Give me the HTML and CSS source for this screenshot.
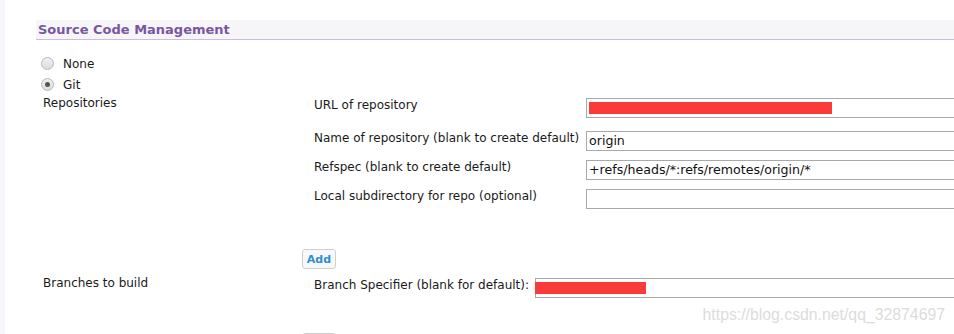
FILE: index.html
```html
<!DOCTYPE html>
<html lang="en">
<head>
    <meta charset="UTF-8">
    <title>Source Code Management</title>
    <link rel="stylesheet" href="styles.css">
</head>
<body>
    <div class="page">
        <div class="section-header">Source Code Management</div>

        <div class="scm-options">
            <label class="radio-row"><span class="radio"></span>None</label>
            <label class="radio-row"><span class="radio checked"></span>Git</label>
        </div>

        <div class="block">
            <div class="block-label">Repositories</div>
            <div class="block-body">
                <div class="field-row first">
                    <div class="field-label">URL of repository</div>
                    <div class="field-input"><span class="redacted url"></span></div>
                </div>
                <div class="field-row second">
                    <div class="field-label">Name of repository (blank to create default)</div>
                    <div class="field-input">origin</div>
                </div>
                <div class="field-row">
                    <div class="field-label">Refspec (blank to create default)</div>
                    <div class="field-input">+refs/heads/*:refs/remotes/origin/*</div>
                </div>
                <div class="field-row">
                    <div class="field-label">Local subdirectory for repo (optional)</div>
                    <div class="field-input"></div>
                </div>
            </div>
        </div>

        <div class="add-row">
            <button class="btn">Add</button>
        </div>

        <div class="block branches">
            <div class="block-label">Branches to build</div>
            <div class="block-body">
                <div class="field-row first inline">
                    <div class="field-label">Branch Specifier (blank for default):</div>
                    <div class="field-input wide"><span class="redacted branch"></span></div>
                </div>
            </div>
        </div>

        <div class="add-row bottom">
            <button class="btn"></button>
        </div>
    </div>

    <div class="watermark">https://blog.csdn.net/qq_32874697</div>
</body>
</html>
```

FILE: styles.css
```css
body {
    font-family: 'DejaVu Sans', Verdana, sans-serif;
    font-size: 12px;
    color: #1a1a1a;
    margin: 0;
    padding: 0;
    background-color: #fff;
    overflow: hidden;
    height: 334px;
}

.page {
    border-left: 5px solid #f8f6fc;
    padding: 20px 0 0 31px;
    height: 314px;
    overflow: hidden;
}

.section-header {
    background-color: #f6f6f9;
    border-bottom: 1px solid #cdbbe0;
    color: #7a56a0;
    font-weight: bold;
    font-size: 13px;
    line-height: 18px;
    padding: 1px 0 0 2px;
    height: 18px;
}

.scm-options {
    padding: 13px 0 0 5px;
}

.radio-row {
    display: flex;
    align-items: center;
    height: 21px;
}

.radio {
    width: 11px;
    height: 11px;
    border: 1px solid #b8b8b8;
    border-radius: 50%;
    background: linear-gradient(#f0f0f0, #dcdcdc);
    margin-right: 9px;
    display: flex;
    align-items: center;
    justify-content: center;
}

.radio.checked::after {
    content: '';
    width: 5px;
    height: 5px;
    border-radius: 50%;
    background-color: #555;
}

.block {
    display: flex;
    align-items: flex-start;
}

.block-label {
    flex-shrink: 0;
    width: 271px;
    padding-left: 7px;
    line-height: 16px;
}

.block-body {
    flex-shrink: 0;
    padding-top: 3px;
}

.field-row {
    display: flex;
    align-items: flex-start;
    margin-top: 9px;
}

.field-row.first {
    margin-top: 0;
}

.field-row.second {
    margin-top: 13px;
}

.field-label {
    flex-shrink: 0;
    width: 272px;
    line-height: 14px;
    white-space: nowrap;
}

.field-input {
    flex-shrink: 0;
    width: 500px;
    height: 18px;
    border: 1px solid #a9a9a9;
    line-height: 18px;
    padding-left: 2px;
    font-size: 12.6px;
    color: #111;
    display: flex;
    align-items: center;
}

.redacted {
    display: block;
    height: 12px;
    background-color: #fb3a3a;
}

.redacted.url {
    width: 243px;
}

.add-row {
    padding: 40px 0 0 266px;
}

.btn {
    font-family: 'DejaVu Sans', Verdana, sans-serif;
    font-size: 11px;
    font-weight: bold;
    color: #2d8ed2;
    background-color: #f8f8f8;
    border: 1px solid #cfcfcf;
    border-radius: 3px;
    width: 34px;
    height: 20px;
    padding: 0;
}

.branches {
    margin-top: 6px;
}

.field-row.inline .field-label {
    width: auto;
    margin-right: 6px;
}

.field-input.wide {
    padding-left: 0;
    width: 600px;
}

.redacted.branch {
    width: 111px;
    margin-left: -1px;
}

.add-row.bottom {
    padding-top: 35px;
}

.watermark {
    position: absolute;
    right: 9px;
    top: 306px;
    font-family: 'Liberation Sans', Arial, sans-serif;
    font-size: 15.8px;
    color: #dcdcdc;
}
```
